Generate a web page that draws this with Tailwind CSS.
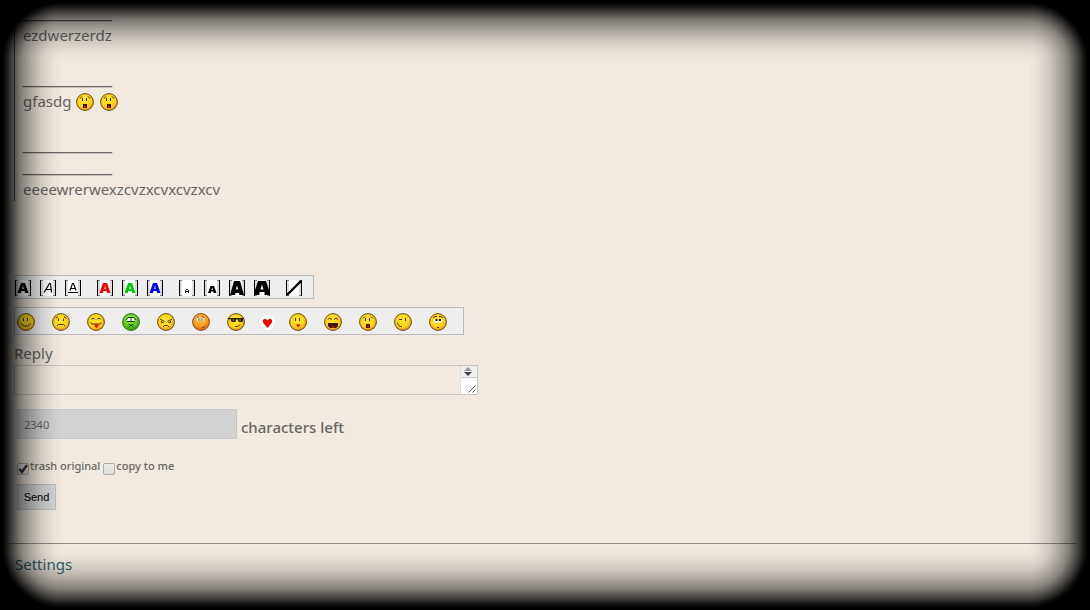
<!DOCTYPE html>
<html lang="en">
<head>
    <meta charset="UTF-8">
    <title>Messages</title>
    <meta name="viewport" content="width=device-width, initial-scale=1.0">
    <script src="https://cdn.jsdelivr.net/npm/@tailwindcss/browser@4"></script>
    <style>
      body { font-family: 'Noto Sans', 'Open Sans', sans-serif; }
      /* fade from the page towards a black edge */
      .fade { --fade: transparent 0, rgb(0 0 0 / .03) 8px, rgb(0 0 0 / .13) 20px, rgb(0 0 0 / .27) 30px, rgb(0 0 0 / .44) 40px, rgb(0 0 0 / .72) 50px, rgb(0 0 0 / .94) 57px, #000 60px; }
    </style>
</head>
<body class="bg-[#f2eae0] text-[#666] text-[15px] leading-[22px] min-h-screen overflow-hidden">

    <!-- Shared icon parts -->
    <svg class="absolute w-0 h-0" aria-hidden="true">
      <defs>
        <radialGradient id="yellow" cx="0.45" cy="0.4" r="0.62">
          <stop offset="0" stop-color="#ffe92a" /><stop offset="0.65" stop-color="#fdd318" /><stop offset="1" stop-color="#e8920c" />
        </radialGradient>
        <radialGradient id="green" cx="0.45" cy="0.35" r="0.65">
          <stop offset="0" stop-color="#a6f04a" /><stop offset="0.6" stop-color="#62cf1c" /><stop offset="1" stop-color="#2f9a0c" />
        </radialGradient>
        <radialGradient id="orange" cx="0.45" cy="0.35" r="0.65">
          <stop offset="0" stop-color="#ffc84a" /><stop offset="0.6" stop-color="#fba01f" /><stop offset="1" stop-color="#e0600c" />
        </radialGradient>
        <symbol id="face" viewBox="0 0 18 18"><circle cx="9" cy="9" r="8.4" fill="url(#yellow)" stroke="#6b4a12" /></symbol>
        <symbol id="face-green" viewBox="0 0 18 18"><circle cx="9" cy="9" r="8.4" fill="url(#green)" stroke="#2d6b12" /></symbol>
        <symbol id="face-orange" viewBox="0 0 18 18"><circle cx="9" cy="9" r="8.4" fill="url(#orange)" stroke="#8a4a12" /></symbol>
        <symbol id="shock" viewBox="0 0 18 18">
          <use href="#face" />
          <path d="M4 5.500L6 3.500M12 3.500L14 5.500M6.500 5v3M10.500 5v3" fill="none" stroke="#3a2500" />
          <path d="M7 11h4v4H7z" fill="#3a1500" /><path d="M8 13h2v1.500H8z" fill="#e01010" />
        </symbol>
        <symbol id="tile" viewBox="0 0 16 16">
          <path d="M0 0h16v16H0z" fill="#fff" /><path d="M1 0h2v16H1zM13 0h2v16h-2z" fill="#ddd" /><path d="M1 0h2v1H1zM13 0h2v1h-2zM1 15h2v1H1zM13 15h2v1h-2z" fill="#888" /><path d="M0 0h1v16H0zM15 0h1v16h-1z" fill="#000" />
        </symbol>
        <symbol id="bold-a" viewBox="0 0 16 16"><path fill-rule="evenodd" d="M6 3h4l3.500 10h-3.300l-.6-2H6.400L5.800 13H2.500zM8 5.500L7.200 9h1.600z" /></symbol>
      </defs>
    </svg>

    <main>
      <!-- Quoted message -->
      <div class="ml-[14px] border-l border-[#555] pl-2 pt-[2px] min-h-[201px]">
        <p class="font-['Liberation_Sans'] text-base leading-[22px]">__________</p>
        <p>ezdwerzerdz</p>
        <p>&nbsp;</p>
        <p class="font-['Liberation_Sans'] text-base leading-[22px]">__________</p>
        <p class="flex items-center">gfasdg
          <svg class="w-[18px] h-[18px] mt-[2px] ml-[5px]" role="img" aria-label="shocked"><use href="#shock" /></svg>
          <svg class="w-[18px] h-[18px] mt-[2px] ml-[6px]" role="img" aria-label="shocked"><use href="#shock" /></svg>
        </p>
        <p>&nbsp;</p>
        <p class="font-['Liberation_Sans'] text-base leading-[22px]">__________</p>
        <p class="font-['Liberation_Sans'] text-base leading-[22px]">__________</p>
        <p>eeeewrerwexzcvzxcvxcvzxcv</p>
      </div>

      <form class="mt-[74px] ml-[14px]" onsubmit="return false">
        <!-- Text style buttons -->
        <div class="flex items-center gap-4 w-[300px] h-6 pt-px bg-[#eee] border border-[#bbb]">
          <div class="flex gap-[9px]">
            <button type="button" class="w-4 h-4" aria-label="Bold"><svg class="w-4 h-4" viewBox="0 0 16 16"><use href="#tile" /><use href="#bold-a" /></svg></button>
            <button type="button" class="w-4 h-4" aria-label="Italic"><svg class="w-4 h-4" viewBox="0 0 16 16"><use href="#tile" /><path d="M4 12.500L9.500 3.500h1L11.500 12.500M6 9.500h5" fill="none" stroke="#000" stroke-width="1.200" /></svg></button>
            <button type="button" class="w-4 h-4" aria-label="Underline"><svg class="w-4 h-4" viewBox="0 0 16 16"><use href="#tile" /><path d="M5 10.500L7.500 3.500h1L11 10.500M6 8.500h4M3 12.500h10" fill="none" stroke="#000" stroke-width="1.100" /></svg></button>
          </div>
          <div class="flex gap-[9px]">
            <button type="button" class="w-4 h-4" aria-label="Red"><svg class="w-4 h-4" viewBox="0 0 16 16"><use href="#tile" /><use href="#bold-a" fill="#f00" /></svg></button>
            <button type="button" class="w-4 h-4" aria-label="Green"><svg class="w-4 h-4" viewBox="0 0 16 16"><use href="#tile" /><use href="#bold-a" fill="#0c0" /></svg></button>
            <button type="button" class="w-4 h-4" aria-label="Blue"><svg class="w-4 h-4" viewBox="0 0 16 16"><use href="#tile" /><use href="#bold-a" fill="#00f" /></svg></button>
          </div>
          <div class="flex gap-[9px]">
            <button type="button" class="w-4 h-4" aria-label="Tiny"><svg class="w-4 h-4" viewBox="0 0 16 16"><use href="#tile" /><path d="M6.500 13v-2.500l1-1h1l1 1V13M6.500 11.500h3" fill="none" stroke="#000" /></svg></button>
            <button type="button" class="w-4 h-4" aria-label="Small"><svg class="w-4 h-4" viewBox="0 0 16 16"><use href="#tile" /><path fill-rule="evenodd" d="M6.500 6h3.500l2.500 7H9.700l-.4-1.500H7.200L6.800 13H4zM8.200 7.800l-.7 2.200h1.500z" /></svg></button>
            <button type="button" class="w-4 h-4" aria-label="Large"><svg class="w-4 h-4" viewBox="0 0 16 16"><use href="#tile" /><path fill-rule="evenodd" d="M5 1h6l4 14h-4.500l-.5-2H6.500L6 15H1zM8 5L7 9.500h2z" /></svg></button>
            <button type="button" class="w-4 h-4" aria-label="Huge"><svg class="w-4 h-4" viewBox="0 0 16 16"><use href="#tile" /><path fill-rule="evenodd" d="M4 1h8l3 9v5h-4.500v-3h-5v3H1v-5zM8 4.500L6.500 9.500h3z" /></svg></button>
          </div>
          <button type="button" class="w-4 h-4" aria-label="Clear style"><svg class="w-4 h-4" viewBox="0 0 16 16"><use href="#tile" /><path d="M1 15L15 1" stroke="#000" stroke-width="2.400" /></svg></button>
        </div>

        <!-- Smileys -->
        <div class="flex items-center gap-[17px] w-[450px] h-7 mt-2 pt-[2px] pl-[2px] bg-[#eee] border border-[#bbb]">
          <button type="button" class="w-[18px] h-[18px]" aria-label="smile"><svg class="w-[18px] h-[18px]" viewBox="0 0 18 18"><use href="#face" /><path d="M6.500 5v3M10.500 5v3M4.500 10.500l1 1.500 2 1h3l2-1 1-1.500" fill="none" stroke="#4a3000" /></svg></button>
          <button type="button" class="w-[18px] h-[18px]" aria-label="sad"><svg class="w-[18px] h-[18px]" viewBox="0 0 18 18"><use href="#face" /><path d="M3.500 5.500L6 3.500M12 3.500l2.500 2M6.500 5.500v2.500M11.500 5.500v2.500M5 13l1.500-1.500h5L13 13" fill="none" stroke="#4a3000" /></svg></button>
          <button type="button" class="w-[18px] h-[18px]" aria-label="tongue"><svg class="w-[18px] h-[18px]" viewBox="0 0 18 18"><use href="#face" /><path d="M4 6.500L5 5.500h2L8 6.500M10 6.500l1-1h2l1 1M3.500 9.500l1.500 1.500h8l1.500-1.500" fill="none" stroke="#4a3000" /><path d="M7.500 11.500h4v1.500l-1.500 2h-1L7.500 13z" fill="#e81818" /></svg></button>
          <button type="button" class="w-[18px] h-[18px]" aria-label="sick"><svg class="w-[18px] h-[18px]" viewBox="0 0 18 18"><use href="#face-green" /><path d="M5 8l1-3h6l1 3-2 1H7z" fill="#fff" /><path d="M4 7l2-2.500h6L14 7M5 8.500h8M9 5v3M6.500 11l1.500 1h2l1.500-1M6.500 14.500L9 12l2.500 2.500" fill="none" stroke="#123c08" /></svg></button>
          <button type="button" class="w-[18px] h-[18px]" aria-label="angry"><svg class="w-[18px] h-[18px]" viewBox="0 0 18 18"><use href="#face" /><path d="M3 6l4.500 2.500M15 6l-4.500 2.500M4.500 8v1.500h2M13.500 8v1.500h-2M6 14l1.500-1.500h3L12 14" fill="none" stroke="#4a3000" /></svg></button>
          <button type="button" class="w-[18px] h-[18px]" aria-label="embarrassed"><svg class="w-[18px] h-[18px]" viewBox="0 0 18 18"><use href="#face-orange" /><path d="M5 8V5l2-1h1v4zM9 8V4h1l2 1v3z" fill="#fff" /><path d="M5 4.500L7 3.500M10 3.500l2 1M7 5v3M10 5v3M10 14.500h2l1-1.500" fill="none" stroke="#7a4010" /></svg></button>
          <button type="button" class="w-[18px] h-[18px]" aria-label="cool"><svg class="w-[18px] h-[18px]" viewBox="0 0 18 18"><use href="#face" /><path d="M1 5h16v1h-1v2l-1 1h-3l-1-1V6.500H9V8L8 9H5L4 8V6.500L1 6z" fill="#2c2000" /><path d="M5.500 7h2M12 7h2" stroke="#b99430" /><path d="M8 13.500h3l2-2" fill="none" stroke="#4a3000" /></svg></button>
          <button type="button" class="flex justify-center w-[10px] h-[18px] pt-[2px]" aria-label="heart"><svg class="w-[15px] h-[15px] shrink-0" viewBox="0 0 15 15"><circle cx="7.500" cy="7.500" r="7.500" fill="#fff" /><path d="M3 5l1-1h2l1.500 1.500L9 4h2l1 1v2.500L7.500 13 3 7.500z" fill="#f00" /></svg></button>
          <button type="button" class="w-[18px] h-[18px]" aria-label="kiss"><svg class="w-[18px] h-[18px]" viewBox="0 0 18 18"><use href="#face" /><path d="M6.500 5v3M10.500 5v3" stroke="#4a3000" /><path d="M7 12l1-1 1 .6 1-.6 1.500 1L9.200 14.500z" fill="#e81818" /></svg></button>
          <button type="button" class="w-[18px] h-[18px]" aria-label="laugh"><svg class="w-[18px] h-[18px]" viewBox="0 0 18 18"><use href="#face" /><path d="M4 6.500l1.500-1.500L8 6.500M10 6.500L12 5l2 1.500" fill="none" stroke="#4a3000" /><path d="M4 10h10v3l-2 2H6l-2-2z" fill="#3a1800" /><path d="M7.500 13h3v1.500h-3z" fill="#e81818" /></svg></button>
          <button type="button" class="w-[18px] h-[18px]" aria-label="shocked"><svg class="w-[18px] h-[18px]"><use href="#shock" /></svg></button>
          <button type="button" class="w-[18px] h-[18px]" aria-label="wink"><svg class="w-[18px] h-[18px]" viewBox="0 0 18 18"><use href="#face" /><path d="M5 6.500h3M11.500 5v3M3.500 9.500v1l1 1.500 2 1.500H8" fill="none" stroke="#4a3000" /></svg></button>
          <button type="button" class="w-[18px] h-[18px]" aria-label="rolling eyes"><svg class="w-[18px] h-[18px]" viewBox="0 0 18 18"><use href="#face" /><path d="M5 6h4v4H6L5 9zM10 6h3v3l-1 1h-2z" fill="#fff" /><path d="M6.500 6h2v2h-2zM10 6h2v2h-2z" fill="#111" /><path d="M4 5l2-1.500h2M10 3.500h2L14 5M8 14.500h2" fill="none" stroke="#4a3000" /></svg></button>
        </div>

        <!-- Reply box -->
        <label for="reply" class="block mt-[7px]">Reply</label>
        <div class="relative w-[464px] h-[30px] mt-px">
          <textarea id="reply" class="block w-full h-full px-1 bg-transparent border border-[#c4c6c4] resize-none overflow-hidden outline-none"></textarea>
          <div class="absolute top-px right-px w-[17px] h-7 bg-white border-l border-[#ddd] pointer-events-none">
            <svg class="w-4 h-7" viewBox="0 0 16 28">
              <path d="M0 0h16v11H0z" fill="#f0f0f0" /><path d="M0 11.500h16" stroke="#ccc" />
              <path d="M3 5l4-4 4 4z" fill="#999" /><path d="M3 6h8l-4 4z" fill="#444" />
              <path d="M7.500 26.500l7-7M11.500 26.500l3-3" stroke="#555" />
            </svg>
          </div>
        </div>

        <div class="flex items-center mt-[14px] ml-[3px]">
          <input id="left" type="text" value="2340" readonly class="w-[220px] h-[30px] px-[6px] bg-[#d3d3d3] border border-[#c6c8ca] text-[11px] outline-none">
          <label for="left" class="ml-1 mt-[6px] font-medium">characters left</label>
        </div>

        <div class="flex items-center mt-[19px] ml-[3px] h-5 text-[11px] font-medium">
          <span class="relative mt-[2px] w-3 h-3">
            <input id="trash" type="checkbox" checked class="peer appearance-none block w-3 h-3 rounded-[2px] border border-[#aaa] bg-linear-to-b from-[#eee] to-[#ddd]">
            <svg class="hidden peer-checked:block absolute inset-0 w-3 h-3 pointer-events-none" viewBox="0 0 12 12"><path d="M2.500 6l2.500 3 5-7" fill="none" stroke="#333" stroke-width="2.400" /></svg>
          </span>
          <label for="trash" class="ml-px -mt-1">trash original</label>
          <span class="relative ml-[3px] mt-[2px] w-3 h-3">
            <input id="copy" type="checkbox" class="peer appearance-none block w-3 h-3 rounded-[2px] border border-[#aaa] bg-linear-to-b from-[#eee] to-[#ddd]">
            <svg class="hidden peer-checked:block absolute inset-0 w-3 h-3 pointer-events-none" viewBox="0 0 12 12"><path d="M2.500 6l2.500 3 5-7" fill="none" stroke="#333" stroke-width="2.400" /></svg>
          </span>
          <label for="copy" class="ml-px -mt-1">copy to me</label>
        </div>

        <button type="submit" class="block mt-[6px] ml-[3px] w-[39px] h-[26px] bg-[#d3d3d3] border border-[#bcbec0] font-['Liberation_Sans'] text-[11px] leading-4 text-black">Send</button>
      </form>

      <hr class="mt-[33px] ml-[6px] mr-[14px] border-[#8a8c8c]">
      <a href="#" class="inline-block mt-[9px] ml-[15px] text-[#336670]">Settings</a>
    </main>

    <!-- Dark page edges -->
    <div class="fade fixed inset-0 pointer-events-none grid grid-cols-[62px_1fr_62px] grid-rows-[62px_1fr_62px]" aria-hidden="true">
      <div class="bg-[radial-gradient(circle_at_100%_100%,var(--fade))]"></div>
      <div class="bg-[linear-gradient(to_top,var(--fade))]"></div>
      <div class="bg-[radial-gradient(circle_at_0_100%,var(--fade))]"></div>
      <div class="bg-[linear-gradient(to_left,var(--fade))]"></div>
      <div></div>
      <div class="bg-[linear-gradient(to_right,var(--fade))]"></div>
      <div class="bg-[radial-gradient(circle_at_100%_0,var(--fade))]"></div>
      <div class="bg-[linear-gradient(to_bottom,var(--fade))]"></div>
      <div class="bg-[radial-gradient(circle_at_0_0,var(--fade))]"></div>
    </div>
</body>
</html>
